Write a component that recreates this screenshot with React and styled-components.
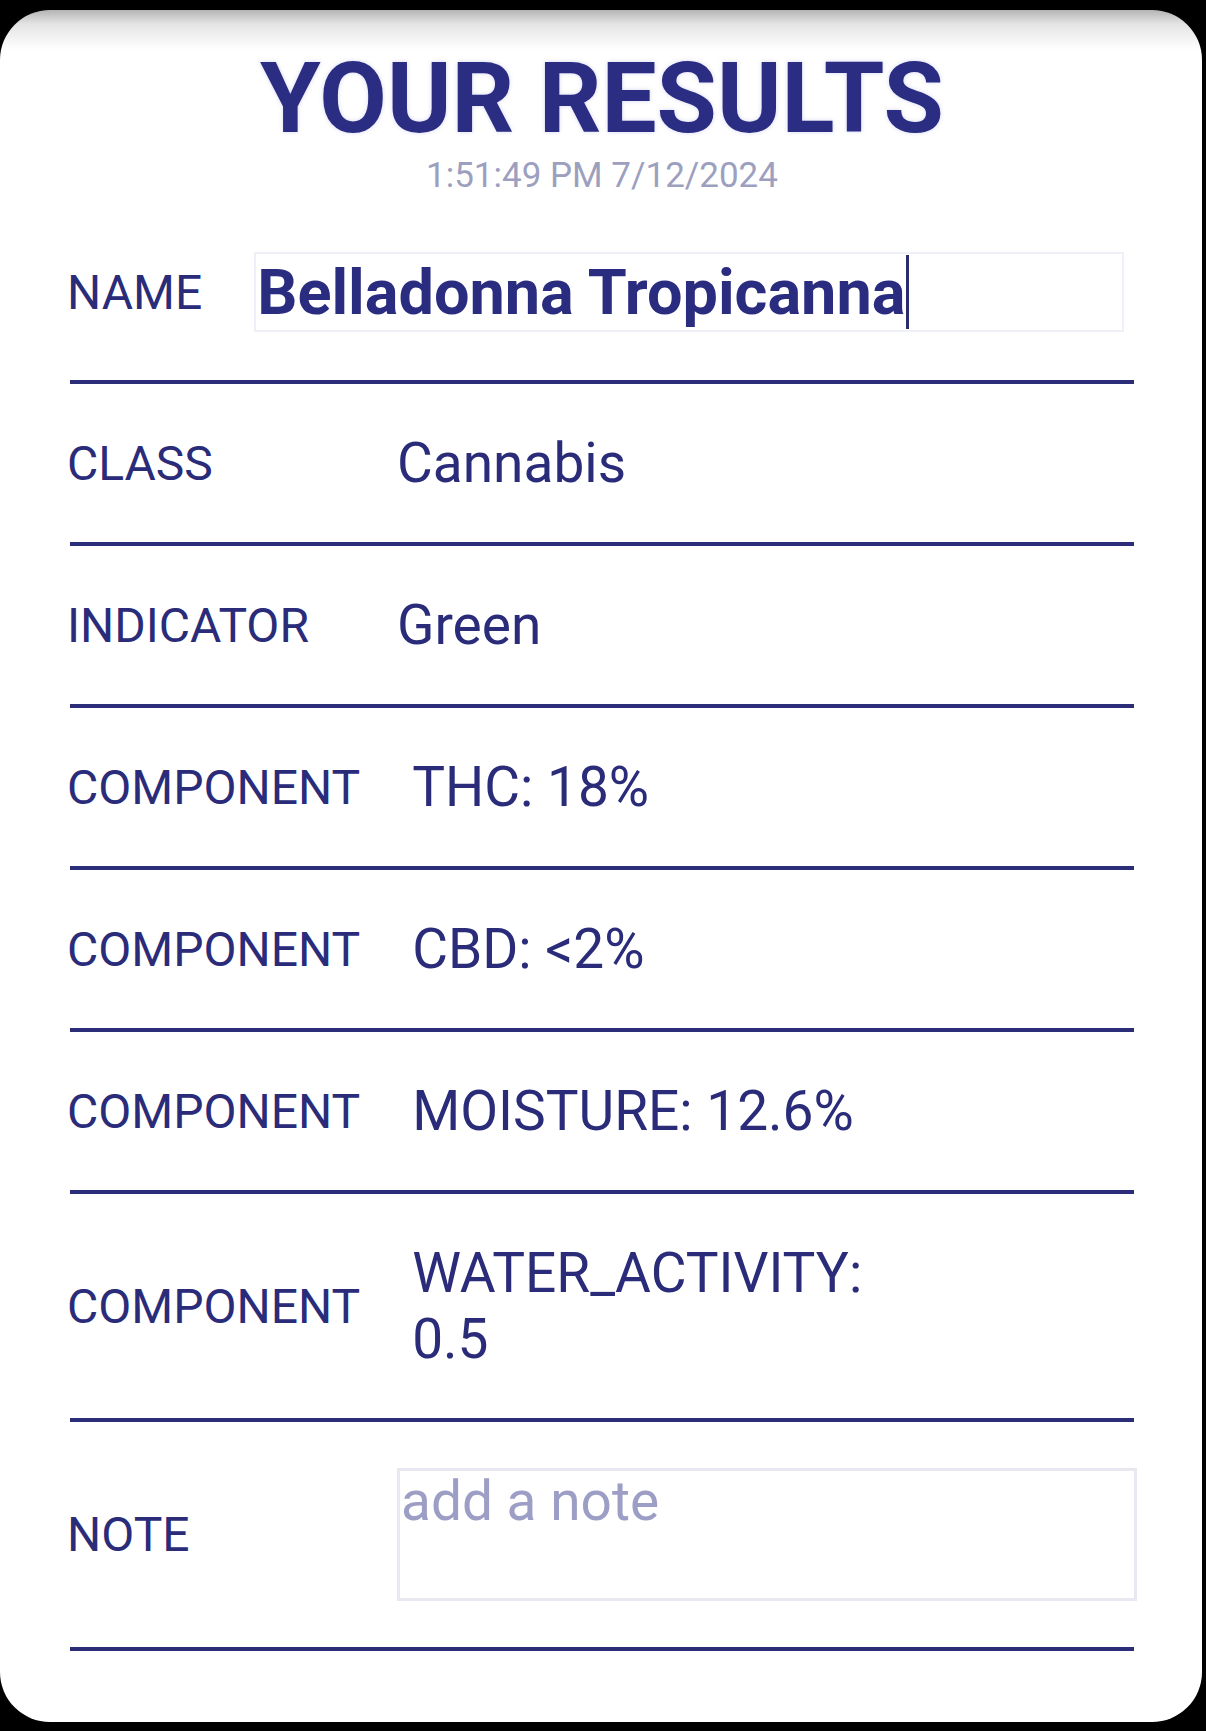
import React from "react";
import styled, { createGlobalStyle } from "styled-components";

const GlobalStyle = createGlobalStyle`
  body {
    margin: 0;
    background: #000;
    font-family: Roboto, "Liberation Sans", Arial, sans-serif;
  }
`;

const Screen = styled.div`
  width: 1206px;
  height: 1731px;
  padding-top: 10px;
  box-sizing: border-box;
  background: #000;
`;

const Card = styled.div`
  width: 1202px;
  height: 1712px;
  box-sizing: border-box;
  padding: 31px 68px 0 70px;
  border-radius: 50px;
  background: linear-gradient(to bottom, #b4b4b4 0, #e4e4e4 14px, #fff 40px);
  color: #2a2c7a;
`;

const Header = styled.header`
  text-align: center;
`;

const Title = styled.h1`
  margin: 0;
  font-size: 98px;
  font-weight: 700;
  line-height: normal;
  color: #2a2d82;
  text-shadow: 0 0 4px rgba(90, 95, 210, 0.25);
`;

const Stamp = styled.div`
  font-size: 35px;
  line-height: 39px;
  color: #9d9fbf;
`;

const Form = styled.div`
  margin-top: 9px;
`;

const Row = styled.div`
  display: flex;
  align-items: center;
  padding: ${(p) => (p.$name ? "48px 0" : "46px 0")};
  border-bottom: 4px solid #2b2d78;
`;

const Label = styled.div`
  flex-shrink: 0;
  box-sizing: border-box;
  min-width: ${(p) => (p.$free ? "0" : "330px")};
  margin-left: -3px;
  padding-right: 52px;
  font-size: 48px;
  line-height: normal;
`;

const Value = styled.div`
  max-width: 480px;
  font-size: 55px;
  line-height: 66px;
`;

const NameField = styled.div`
  flex: 1;
  display: flex;
  align-items: center;
  height: 80px;
  margin-right: 10px;
  padding-left: 1px;
  box-sizing: border-box;
  border: 2px solid #efeff7;
  font-size: 63px;
  font-weight: 700;
  line-height: normal;
  color: #2a2c80;
  white-space: pre;
`;

const Caret = styled.span`
  display: inline-block;
  width: 3px;
  height: 74px;
  margin-left: 1px;
  background: #2a2c6e;
`;

const NoteArea = styled.textarea`
  flex: 1;
  height: 133px;
  margin: 0 -3px 0 0;
  padding: 0 1px;
  box-sizing: border-box;
  border: 3px solid #e8e8f1;
  border-radius: 0;
  outline: none;
  resize: none;
  background: #fff;
  font-family: Roboto, "Liberation Sans", Arial, sans-serif;
  font-size: 55px;
  line-height: 1.1;
  color: #2a2c7a;

  &::placeholder {
    color: #9c9ec6;
  }
`;

const fields = [
  { label: "CLASS", value: "Cannabis" },
  { label: "INDICATOR", value: "Green" },
  { label: "COMPONENT", value: "THC: 18%" },
  { label: "COMPONENT", value: "CBD: <2%" },
  { label: "COMPONENT", value: "MOISTURE: 12.6%" },
  { label: "COMPONENT", value: "WATER_ACTIVITY: 0.5" },
];

export default function App() {
  return (
    <Screen>
      <GlobalStyle />
      <Card>
        <Header>
          <Title>YOUR RESULTS</Title>
          <Stamp>1:51:49 PM 7/12/2024</Stamp>
        </Header>
        <Form>
          <Row $name>
            <Label $free>NAME</Label>
            <NameField>
              Belladonna Tropicanna
              <Caret />
            </NameField>
          </Row>
          {fields.map((f, i) => (
            <Row key={i}>
              <Label>{f.label}</Label>
              <Value>{f.value}</Value>
            </Row>
          ))}
          <Row>
            <Label>NOTE</Label>
            <NoteArea placeholder="add a note" />
          </Row>
        </Form>
      </Card>
    </Screen>
  );
}
